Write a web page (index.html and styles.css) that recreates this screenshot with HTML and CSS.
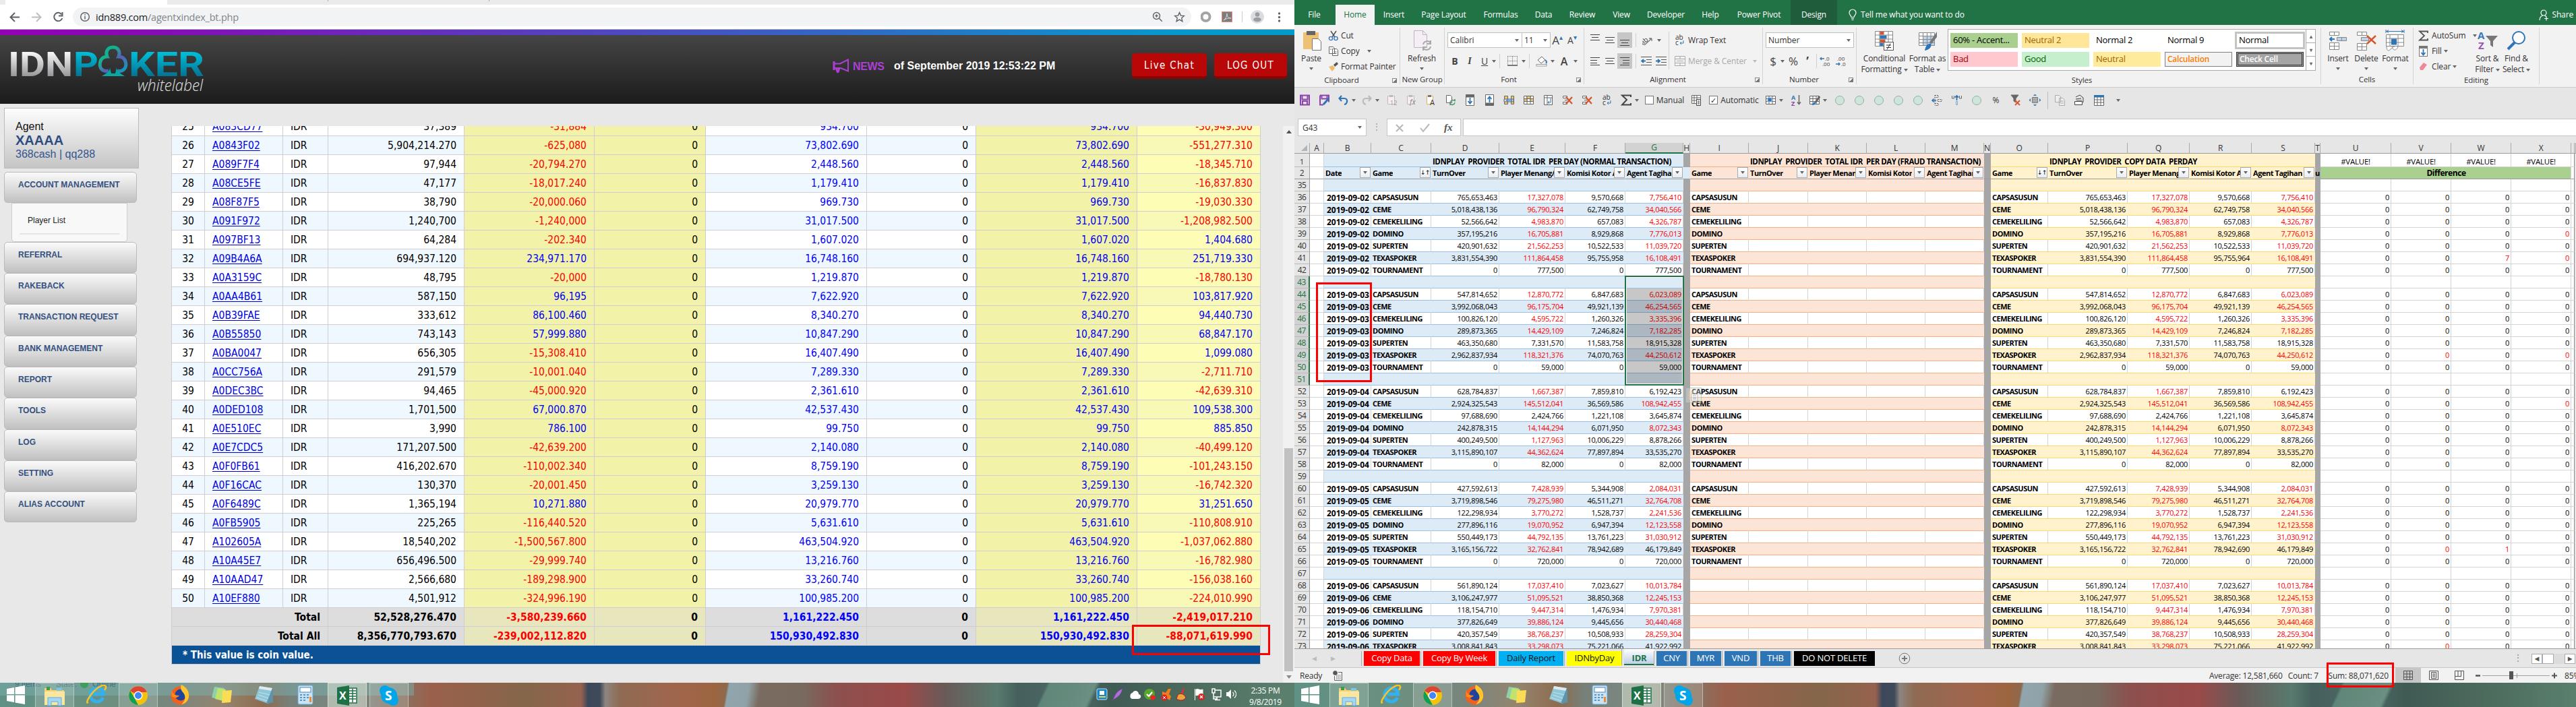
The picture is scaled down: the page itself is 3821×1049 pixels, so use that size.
FILE: index.html
```html
<!DOCTYPE html>
<html lang="en">
<head>
<meta charset="utf-8">
<title>Agent report and workbook</title>
<link rel="stylesheet" href="styles.css">
</head>
<body>
<div class="desktop">

<section class="monitor left">
  <div class="chrome-tabs"><i class="tab-active"></i><i class="tab-sep"></i><i class="tab-sep two"></i></div>
  <div class="chrome-bar">
    <svg class="nav" width="96" height="36" viewBox="0 0 96 36" fill="none" stroke="#5f6368" stroke-width="2"><path d="M29 18.500H16M22 12l-6.500 6.500L22 25"/><path stroke="#bcbec0" d="M47 18.500h13M54 12l6.500 6.500L54 25"/><path d="M91.500 14.500A6.200 6.200 0 1 0 92.300 20"/><path d="M92.500 11v5.500H87" /></svg>
    <div class="omnibox">
      <svg width="16" height="16" viewBox="0 0 16 16" fill="none" stroke="#5f6368" stroke-width="1.500"><circle cx="8" cy="8" r="6.300"/><path d="M8 7v4.500M8 4.300v1.500"/></svg>
      <span class="url">idn889.com<b>/agentxindex_bt.php</b></span>
      <svg class="zoomi" width="16" height="16" viewBox="0 0 16 16" fill="none" stroke="#5f6368" stroke-width="1.400"><circle cx="6.500" cy="6.500" r="5"/><path d="M10.300 10.300l4.500 4.500M4.300 6.500h4.400M6.500 4.300v4.400"/></svg>
      <svg width="17" height="16" viewBox="0 0 17 16" fill="none" stroke="#5f6368" stroke-width="1.400"><path d="M8.500 1.500l2 4.600 5 .4-3.800 3.300 1.200 4.900-4.400-2.600-4.400 2.600 1.200-4.900L1.500 6.500l5-.4z"/></svg>
    </div>
    <svg class="ext" width="136" height="36" viewBox="0 0 136 36"><circle cx="7.500" cy="18" r="6" fill="none" stroke="#a3a3a3" stroke-width="4"/><rect x="31.500" y="10.500" width="15" height="15" fill="#7d7b7b" stroke="#e08a84"/><path d="M34 23c3-2 5-6 5-10 0 5 2 7 6 7-4-.6-7 .5-11 3z" fill="none" stroke="#ddd"/><path d="M61.500 10v16" stroke="#ccc"/><circle cx="84" cy="18" r="10" fill="#dadce0"/><circle cx="84" cy="14.500" r="3.300" fill="#9a9ea3"/><ellipse cx="84" cy="22" rx="5.800" ry="3.300" fill="#9a9ea3"/><g fill="#5f6368"><circle cx="116.500" cy="13" r="1.700"/><circle cx="116.500" cy="18.500" r="1.700"/><circle cx="116.500" cy="24" r="1.700"/></g></svg>
  </div>
  <div class="rainbow"></div>
  <header class="site-head">
    <svg class="logo" width="310" height="102" viewBox="0 0 310 102">
      <defs>
        <linearGradient id="silver" x1="0" y1="0" x2="0" y2="1"><stop offset="0.200" stop-color="#f4f4f4"/><stop offset="1" stop-color="#77777b"/></linearGradient>
        <linearGradient id="teal" x1="0" y1="0" x2="0" y2="1"><stop offset="0.200" stop-color="#00bcd6"/><stop offset="1" stop-color="#04597c"/></linearGradient>
        <linearGradient id="club" x1="0" y1="0" x2="1" y2="1"><stop offset="0" stop-color="#0aa7a0"/><stop offset=".3" stop-color="#12b58c"/><stop offset=".6" stop-color="#5b5fb8"/><stop offset="1" stop-color="#0a9fc0"/></linearGradient>
      </defs>
      <text x="12" y="61" class="logo-t" fill="url(#silver)" textLength="96" lengthAdjust="spacingAndGlyphs">IDN</text>
      <text x="109" y="61" class="logo-t" fill="url(#teal)" textLength="37" lengthAdjust="spacingAndGlyphs">P</text>
      <text x="191" y="61" class="logo-t" fill="url(#teal)" textLength="112" lengthAdjust="spacingAndGlyphs">KER</text>
      <path d="M161 53c-9 2-14-4-12.500-12 1-6 5-9 10.500-9-3-6 0-14 8.500-14s11.500 8 8.500 14c6 0 9.500 3 10.500 9 1.500 8-4 14-12.500 12" fill="none" stroke="url(#club)" stroke-width="5"/>
      <path d="M163 48c0 6-4 8-12 13h34c-8-5-12-7-12-13l-2 9h-6z" fill="#08a79f"/>
      <text x="204" y="83" class="logo-w" textLength="97" lengthAdjust="spacingAndGlyphs">whitelabel</text>
    </svg>
    <div class="news">
      <svg width="25" height="22" viewBox="0 0 25 22" fill="none" stroke="#ac3fd4" stroke-width="2"><path d="M23 1.500v17L12 14H2V7.500h9z"/><path d="M2 4v13M5 14l3 7M10 14l-2 6" stroke-width="3"/></svg>
      <b>NEWS</b><span>of September 2019 12:53:22 PM</span>
    </div>
    <span class="btn">Live Chat</span><span class="btn out">LOG OUT</span>
  </header>
  <div class="site-body">
    <aside class="side">
      <div class="agent"><span>Agent</span><b>XAAAA</b><em>368cash | qq288</em></div>
      <div class="mi first">ACCOUNT MANAGEMENT</div>
      <div class="sub"><span>Player List</span></div>
      <div class="mi">REFERRAL</div><div class="mi">RAKEBACK</div><div class="mi">TRANSACTION REQUEST</div><div class="mi">BANK MANAGEMENT</div><div class="mi">REPORT</div><div class="mi">TOOLS</div><div class="mi">LOG</div><div class="mi">SETTING</div><div class="mi">ALIAS ACCOUNT</div>
    </aside>
    <div class="report">
      <table class="players">
        <colgroup><col style="width:50px"><col style="width:116px"><col style="width:67px"><col style="width:202px"><col style="width:193px"><col style="width:165px"><col style="width:239px"><col style="width:162px"><col style="width:239px"><col style="width:183px"></colgroup>
        <tbody id="players"></tbody>
      </table>
      <i class="mark m1"></i>
    </div>
    <div class="scroll"><i class="up"></i><i class="thumb"></i><i class="down"></i></div>
  </div>
  <footer class="taskbar">
    <div class="ghost"><span>9 items</span><span>State:</span><i></i><span>Online</span></div>
    <div class="apps"></div>
    <div class="tray">
      <svg width="210" height="34" viewBox="0 0 210 34">
        <rect x="3" y="9" width="15" height="16" rx="2" fill="#1488cf" stroke="#cde"/><rect x="7" y="12" width="7" height="6" fill="#fff"/><path d="M6 21h10" stroke="#f5d33d" stroke-width="2"/>
        <path d="M27 26c3-9 6-14 14-17-2 8-6 12-12 15z" fill="#b06fd8" stroke="#7a3cab" stroke-width=".6"/>
        <path d="M55 24h9c5 0 6-6 1-7 0-5-7-7-9-2-4 0-5 8-1 9z" fill="#fff"/>
        <circle cx="81" cy="17" r="8" fill="#5aa52c"/><path d="M77 17l3 3 5-6" stroke="#fff" stroke-width="2" fill="none"/><circle cx="86" cy="22" r="3.600" fill="#e22"/>
        <path d="M100 13l5 2 4-6h4l-3 8 3 3-2 6-6-4-5 2z" fill="#f57c1c"/><circle cx="103" cy="22" r="4.500" fill="#e22020"/><path d="M101 20l4 4m0-4l-4 4" stroke="#fff"/>
        <path d="M131 8l2 1-3 9h-3z" fill="#d33"/><path d="M123 18c4-3 9-2 12 4-3 5-9 5-14 2z" fill="#e9a53a" stroke="#b13"/>
        <path d="M148.500 9v17M150 10c4-2 5 2 10 0v9c-5 2-6-2-10 0z" fill="#fff" stroke="#fff"/><circle cx="158" cy="21" r="5" fill="#d22"/><path d="M156 19l4 4m0-4l-4 4" stroke="#fff" stroke-width="1.300"/>
        <path d="M178 11h9v10h-10M174 9v6h4V9zM176 15v9h6M181 21v4M178 25.500h8" fill="none" stroke="#fff" stroke-width="1.500"/>
        <path d="M195 14h3l4-4v14l-4-4h-3z" fill="#fff"/><path d="M204.500 14c2 2 2 4 0 6M207 11.500c3.500 3.500 3.500 7.500 0 11" fill="none" stroke="#fff" stroke-width="1.200"/>
      </svg>
      <div class="clock"><span>2:35 PM</span><span>9/8/2019</span></div>
    </div>
  </footer>
</section>

<section class="monitor right">
  <nav class="xl-tabs">
    <span style="width:59px">File</span><i></i><span class="on" style="width:58px">Home</span><span style="width:57px">Insert</span><span style="width:91px">Page Layout</span><span style="width:78px">Formulas</span><span style="width:49px">Data</span><span style="width:66px">Review</span><span style="width:50px">View</span><span style="width:82px">Developer</span><span style="width:50px">Help</span><span style="width:94px">Power Pivot</span><span class="ctx" style="width:69px">Design</span>
    <svg class="bulb" width="14" height="18" viewBox="0 0 14 18" fill="none" stroke="#fff" stroke-width="1.200"><path d="M5 12.500C5 10 2 9 2 6a5 5 0 0 1 10 0c0 3-3 4-3 6.500zM5 14.500h4M5.500 16.500h3"/></svg>
    <span class="tell">Tell me what you want to do</span>
    <svg class="shi" width="15" height="18" viewBox="0 0 15 18" fill="none" stroke="#fff" stroke-width="1.200"><circle cx="7" cy="6" r="4"/><path d="M1 17c0-4 2-6 4.500-7M9 10l2 2M8 14.500h6M11 11.500v6"/></svg>
    <span class="share">Share</span>
  </nav>

  <div class="ribbon">
    <div class="grp" style="width:157px">
      <div class="gb">
        <div class="big" style="width:50px"><svg width="32" height="32" viewBox="0 0 32 32"><rect x="4" y="4" width="23" height="25" fill="#eec275"/><rect x="9" y="2" width="13" height="6" fill="#666"/><path d="M17.500 13.500h9l4 4v13h-13z" fill="#fff" stroke="#777"/></svg><span>Paste</span><i class="dd"></i></div>
        <div class="stack"><span><svg width="16" height="16" viewBox="0 0 16 16"><path d="M4 1l6 9M12 1l-6 9" stroke="#555" stroke-width="1.600"/><g fill="none" stroke="#3a78b9" stroke-width="1.400"><circle cx="4" cy="12" r="2.600"/><circle cx="11.500" cy="12" r="2.600"/></g></svg>Cut</span><span><svg width="16" height="16" viewBox="0 0 16 16" fill="#fff" stroke="#666"><path d="M1.500 1.500h6l2 2v8h-8zM6.500 4.500h6l2 2v8h-8zM3 5h2M8.500 9h4M8.500 11.500h4"/></svg>Copy<i class="dd gap"></i></span><span><svg width="16" height="16" viewBox="0 0 16 16"><path d="M1 8l6-2 3 4-4 5z" fill="#eebb6b"/><path d="M8 5l5-4 2 3-5 4z" fill="#555"/></svg>Format Painter</span></div>
      </div><div class="gl">Clipboard<b class="ln"></b></div>
    </div>
    <div class="grp" style="width:66px"><div class="gb"><div class="big" style="width:64px"><svg width="30" height="32" viewBox="0 0 30 32"><path d="M3.500 1.500h13l6 6v19h-19z" fill="#f5eef5" stroke="#bfb3bf"/><path d="M16.500 1.500v6h6" fill="none" stroke="#bfb3bf"/><path d="M17 22a6 6 0 0 1 11-2M28 25a6 6 0 0 1-11 2M28 16v5h-5M17 31v-5h5" fill="none" stroke="#aaa" stroke-width="2"/></svg><span>Refresh</span><i class="dd"></i></div></div><div class="gl">New Group</div></div>
    <div class="grp" style="width:207px">
      <div class="gb col">
        <div class="line r1"><span class="combo" style="width:111px">Calibri<i class="dd"></i></span><span class="combo" style="width:43px">11<i class="dd"></i></span><span class="ic" style="width:22px;font-size:17px">A<sup>▴</sup></span><span class="ic" style="width:22px;font-size:14px">A<sup>▾</sup></span></div>
        <div class="line r2"><span class="ic" style="width:22px"><b>B</b></span><span class="ic" style="width:22px"><em>I</em></span><span class="ic" style="width:22px"><u>U</u></span><i class="dd"></i><i class="vs"></i><span class="ic" style="width:28px"><svg width="15" height="15" viewBox="0 0 15 15" fill="none" stroke="#777" stroke-dasharray="1 1"><path d="M.5.500v14M7.500.500v14M14.500.500v14M0 .5h15M0 7.500h15"/><path d="M0 14h15" stroke-dasharray="none" stroke-width="2"/></svg></span><i class="dd"></i><i class="vs"></i><span class="ic" style="width:27px"><svg width="18" height="17" viewBox="0 0 18 17"><path d="M3 7l6-5 5 5-6 5z" fill="#fff" stroke="#666"/><path d="M14 7c3 2 2 4 1 5" stroke="#3a78b9" stroke-width="2" fill="none"/><rect x="1" y="13.500" width="15" height="2.500" fill="#fff" stroke="#999"/></svg></span><i class="dd"></i><span class="ic fc" style="width:28px">A</span><i class="dd"></i></div>
      </div><div class="gl">Font<b class="ln"></b></div>
    </div>
    <div class="grp" style="width:265px">
      <div class="gb algn">
        <div class="col">
          <div class="line r1"><span class="ic w"><i class="ba t"></i></span><span class="ic w"><i class="ba"></i></span><span class="ic w sel"><i class="ba b"></i></span><i class="vs"></i><span class="ic" style="width:27px"><svg width="17" height="16" viewBox="0 0 17 16"><path d="M3 15L14 5M14 5h-4M14 5v4" stroke="#777" stroke-width="1.300" fill="none"/><text x="-3" y="10" transform="rotate(-40 6 8)" font-size="10" fill="#444">ab</text></svg></span><i class="dd"></i></div>
          <div class="line r2"><span class="ic w"><i class="ba l"></i></span><span class="ic w"><i class="ba"></i></span><span class="ic w sel"><i class="ba r"></i></span><i class="vs"></i><span class="ic w"><svg width="16" height="13" viewBox="0 0 16 13" stroke="#555" fill="none"><path d="M0 .5h16M8 4.500h8M8 8.500h8M0 12.500h16"/><path d="M7 6.500H1M4 4L1 6.500 4 9" stroke="#2e75b6" stroke-width="1.800"/></svg></span><span class="ic w"><svg width="16" height="13" viewBox="0 0 16 13" stroke="#555" fill="none"><path d="M0 .5h16M8 4.500h8M8 8.500h8M0 12.500h16"/><path d="M0 6.500h6M3 4l3 2.500L3 9" stroke="#2e75b6" stroke-width="1.800"/></svg></span></div>
        </div>
        <i class="vs tall"></i>
        <div class="col wrapc"><div class="line r1"><svg width="16" height="17" viewBox="0 0 16 17"><text x="1" y="8" font-size="10" fill="#333">ab</text><text x="1" y="16" font-size="10" fill="#333">c</text><path d="M13 9v4H8M10 11l-2 2 2 2" stroke="#2e75b6" fill="none"/></svg>Wrap Text</div><div class="line r2 dis"><svg width="16" height="15" viewBox="0 0 16 15" fill="none" stroke="#aaa"><path d="M.5.500h15v14H.5zM0 4.500h16M0 10.500h16M8 0v4M8 11v4M3 7.500h10"/></svg>Merge &amp; Center<i class="dd gap"></i></div></div>
      </div><div class="gl">Alignment<b class="ln"></b></div>
    </div>
    <div class="grp" style="width:139px"><div class="gb col"><div class="line r1"><span class="combo" style="width:131px">Number<i class="dd"></i></span></div><div class="line r2 num"><span class="ic" style="width:22px">$</span><i class="dd"></i><span class="ic" style="width:26px">%</span><span class="ic" style="width:16px"><b>’</b></span><i class="vs"></i><svg width="48" height="16" viewBox="0 0 48 16" font-size="8" fill="#444"><text x="8" y="7">.0</text><text x="4" y="15">.00</text><path d="M7 4H1M3 2L1 4l2 2" stroke="#2e75b6" fill="none" stroke-width="1.300"/><text x="26" y="7">.00</text><text x="32" y="15">.0</text><path d="M24 12h6M28 10l2 2-2 2" stroke="#2e75b6" fill="none" stroke-width="1.300"/></svg></div></div><div class="gl">Number<b class="ln"></b></div></div>
    <div class="grp" style="width:689px">
      <div class="gb sty">
        <div class="big" style="width:76px"><svg width="32" height="32" viewBox="0 0 32 32" fill="#fff" stroke="#888"><path d="M2.500 2.500h26v22h-26z"/><path d="M9 2.500v22M22 2.500v22M2.500 8h26M2.500 14h26M2.500 19h26"/><path fill="#d9532c" stroke="none" d="M9.500 3h6v4.500h-6zM9.500 14.500h8v4.500h-8z"/><path fill="#2e75b6" stroke="none" d="M9.500 8.500h10v5h-10zM9.500 19.500h5v4.500h-5z"/><rect x="15.500" y="18.500" width="14" height="12" stroke="#555"/><path d="M19 23h7M19 26.500h7M25 20.500l-5 9" stroke="#333"/></svg><span>Conditional</span><span>Formatting<i class="dd"></i></span></div>
        <div class="big" style="width:52px"><svg width="32" height="32" viewBox="0 0 32 32" fill="#fff" stroke="#888"><path d="M3.500 4.500h23v19h-23z"/><path fill="#bcd3ea" d="M9.500 9.500h17v14h-17z"/><path d="M9.500 4.500v19M15.500 4.500v19M21 4.500v19M3.500 9.500h23M3.500 14.500h23M3.500 19.500h23"/><path d="M30 3v8l-8 10-3-2z" fill="#777" stroke="none"/><path d="M12 31c1-7 5-11 9-10 2 5-3 9-9 10z" fill="#2e75b6" stroke="none"/></svg><span>Format as</span><span>Table<i class="dd"></i></span></div>
        <div class="gallery"><div class="cells"><span style="background:#a9d08e">60% - Accent...</span><span style="background:#ffe699;color:#9c6500">Neutral 2</span><span>Normal 2</span><span>Normal 9</span><span class="cur">Normal</span><span style="background:#ffc7ce;color:#9c0006">Bad</span><span style="background:#c6efce;color:#006100">Good</span><span style="background:#ffeb9c;color:#9c6500">Neutral</span><span class="calc">Calculation</span><span class="chk">Check Cell</span></div><div class="gs"><b>▴</b><b>▾</b><b>▾</b></div></div>
      </div><div class="gl styl">Styles</div>
    </div>
    <div class="grp" style="width:137px">
      <div class="gb cel">
        <div class="big" style="width:42px"><svg width="28" height="32" viewBox="0 0 28 32" fill="#fff" stroke="#888"><path d="M1.500 3.500h14v5h-14zM8.500 3.500v5M1.500 19.500h14v10h-14zM8.500 19.500v10M1.500 24.500h14"/><path d="M12.500 11.500h14v5h-14zM19.500 11.500v5" fill="#bcd3ea"/><path d="M9 14H2M5 11l-3 3 3 3" stroke="#2e75b6" fill="none" stroke-width="2"/></svg><span>Insert</span><i class="dd"></i></div>
        <div class="big" style="width:42px"><svg width="30" height="32" viewBox="0 0 30 32" fill="#fff" stroke="#888"><path d="M1.500 3.500h14v5h-14zM8.500 3.500v5M1.500 20.500h14v10h-14zM8.500 20.500v10M1.500 25.500h14"/><path d="M7.500 11.500h11v5h-11z" fill="#bcd3ea"/><path d="M16 9l13 12M29 9L16 21" stroke="#d9532c" stroke-width="2.400"/></svg><span>Delete</span><i class="dd"></i></div>
        <div class="big" style="width:44px"><svg width="30" height="32" viewBox="0 0 30 32" fill="#fff" stroke="#888"><path d="M1.500 7.500h26v17h-26zM7 7.500v17M19 7.500v17M1.500 13h26M1.500 19h26M2 25c0 3 1 6 3 6s6-6 9-6M10 25c1 5 6 8 9 0"/><path fill="#2e75b6" stroke="none" d="M9 13.500h8v9H9z"/><path d="M1 2.500h27M1 0v5M28 0v5M5 .5L2 2.500l3 2M24 .5l3 2-3 2" stroke="#2e75b6" fill="none"/></svg><span>Format</span><i class="dd"></i></div>
      </div><div class="gl">Cells</div>
    </div>
    <div class="grp" style="width:187px">
      <div class="gb">
        <div class="stack ed"><span><svg width="17" height="16" viewBox="0 0 17 16"><path d="M14 4V1.500H2L9 8l-7 6.500h12V12" fill="none" stroke="#555" stroke-width="1.800"/></svg>AutoSum<i class="dd gap"></i></span><span><svg width="17" height="16" viewBox="0 0 17 16"><rect x="1.500" y=".5" width="12" height="15" fill="#fff" stroke="#777"/><path d="M1.500 1h12v3h-12z" fill="#777"/><path d="M7.500 5v8M4.500 10l3 3.500 3-3.500" stroke="#2e75b6" stroke-width="1.800" fill="none"/></svg>Fill<i class="dd"></i></span><span><svg width="17" height="16" viewBox="0 0 17 16"><path d="M2 9l6-7 5 3-6 8H3z" fill="#ea8a9b"/></svg>Clear<i class="dd"></i></span></div>
        <div class="big" style="width:43px"><svg width="32" height="32" viewBox="0 0 32 32"><text x="1" y="14" font-size="15" font-weight="700" fill="#3a78b9">A</text><text x="2" y="29" font-size="15" font-weight="700" fill="#9557b4">Z</text><path d="M13 9h18l-7 8v9l-4-3v-6z" fill="#777"/></svg><span>Sort &amp;</span><span>Filter<i class="dd"></i></span></div>
        <div class="big" style="width:43px"><svg width="32" height="32" viewBox="0 0 32 32" fill="none" stroke="#2e75b6"><circle cx="19" cy="12" r="9" stroke-width="2" fill="#fff"/><path d="M13 19L3 29" stroke-width="4"/></svg><span>Find &amp;</span><span>Select<i class="dd"></i></span></div>
      </div><div class="gl">Editing</div>
    </div>
  </div>

  <div class="qat" id="qat"></div>
  <div class="fbar"><span class="nbox">G43<i class="dd"></i></span><span class="dots">⋮</span><span class="fxb"><svg width="110" height="24" viewBox="0 0 110 24" fill="none" stroke="#b8b8b8" stroke-width="2"><path d="M13 8l10 10M23 8L13 18M49 13l4 5 9-11"/><text x="84" y="17" font-size="15" font-style="italic" font-family="Liberation Serif, serif" fill="#555" stroke="none" font-weight="700">fx</text></svg></span><span class="inp"></span></div>

  <div class="sheet">
    <table class="grid"><colgroup id="cols"></colgroup><tbody id="grid"></tbody></table>
    <i class="selbox"></i><i class="pasteopt"><svg width="22" height="22" viewBox="0 0 22 22"><path d="M4 4h8v13H4z" fill="#f3d9b8"/><path d="M8 8h9v11H8z" fill="#fff" stroke="#999"/><path d="M10 11h5M10 14h5M10 16h5" stroke="#5a8fb8"/></svg></i><i class="mark m2"></i>
  </div>
  <div class="stabs">
    <span class="arr">◀</span><span class="arr">▶</span>
    <span class="st s1" style="width:83px">Copy Data</span><span class="st s1" style="width:107px">Copy By Week</span><span class="st s2" style="width:96px">Daily Report</span><span class="st s3" style="width:82px">IDNbyDay</span><span class="st s4">IDR</span><span class="st s5" style="width:45px">CNY</span><span class="st s5" style="width:46px">MYR</span><span class="st s5" style="width:48px">VND</span><span class="st s5" style="width:45px">THB</span><span class="st s6" style="width:120px">DO NOT DELETE</span>
    <svg class="plus" width="18" height="18" viewBox="0 0 18 18" fill="none" stroke="#777"><circle cx="9" cy="9" r="7.800"/><path d="M5 9h8M9 5v8" stroke-width="2"/></svg>
    <span class="hd">⋮</span><span class="hs"><b>◀</b><i></i><b>▶</b></span>
  </div>
  <div class="status">
    <span class="rdy">Ready</span><svg width="15" height="15" viewBox="0 0 15 15" fill="none" stroke="#666"><circle cx="3.500" cy="3.500" r="3" fill="#555"/><path d="M8 2.500h6M2.500 8v6.500h11V3" /><path d="M5 7h7M5 9.500h7M5 12h7" stroke-dasharray="2 1"/></svg>
    <span class="avg">Average: 12,581,660</span><span class="cnt">Count: 7</span><span class="sum">Sum: 88,071,620</span>
    <span class="vb on"><svg width="14" height="14" viewBox="0 0 14 14" fill="none" stroke="#555"><path d="M.5.500h13v13H.5zM5 .5v13M9.500.500v13M.5 5h13M.5 9.500h13"/></svg></span><span class="vb"><svg width="14" height="14" viewBox="0 0 14 14" fill="none" stroke="#555"><path d="M.5.500h13v13H.5zM3.500 2.500h7v9h-7zM5 5h4M5 7h4M5 9h4"/></svg></span><span class="vb"><svg width="14" height="14" viewBox="0 0 14 14" fill="none" stroke="#555"><path d="M.5.500h13v13H.5zM5 .5v8M9.500.500v8M0 8.500h10"/></svg></span>
    <svg class="slider" width="126" height="20" viewBox="0 0 126 20"><path d="M3 10.500h7" stroke="#555" stroke-width="2.500"/><path d="M13 10.500h100M64.500 7v7" stroke="#a0a0a0"/><rect x="53" y="4" width="6" height="12" fill="#555"/><path d="M116 10.500h8M120 6.500v8" stroke="#555" stroke-width="2"/></svg>
    <span class="pct">85%</span>
    <i class="mark m3"></i>
  </div>
  <footer class="taskbar"><div class="apps"></div></footer>
</section>
</div>
<template id="apps">
  <span class="app"><svg width="30" height="28" viewBox="0 0 30 28" fill="#fff"><path d="M1 5l11-2v10H1zM13.500 2.700L28 0v13H13.500zM1 14.500h11v10.500L1 23zM13.500 14.500H28V28l-14.500-2.500z"/></svg></span>
  <span class="app box"><svg width="34" height="30" viewBox="0 0 34 30"><path d="M2 4h9l2 3h18v22H2z" fill="#f3d372"/><path d="M5 2h5v5H5z" fill="#3d9b4a"/><path d="M20 4h8v4h-8z" fill="#7cc5ee"/><path d="M2 9h30v20H2z" fill="#fbe6a0"/><path d="M7 30V18h20v12h-5v-6H12v6z" fill="#a4d7f3" stroke="#5faede"/></svg></span>
  <span class="app"><svg width="32" height="30" viewBox="0 0 32 30"><path d="M26 19a10 10 0 1 1 .8-5H11" fill="none" stroke="#31b2ee" stroke-width="5"/><path d="M4 26C-2 30 7 12 19 4c11-7 13-1 9 4" fill="none" stroke="#f4c22c" stroke-width="2.500"/></svg></span>
  <span class="app box"><svg width="30" height="30" viewBox="0 0 30 30"><circle cx="15" cy="15" r="14" fill="#f4c20d"/><path d="M15 15L3 8a14 14 0 0 1 25 2H15z" fill="#db4437"/><path d="M3 8l6 10 6 11A14 14 0 0 1 3 8z" fill="#0f9d58"/><circle cx="15" cy="15" r="6.500" fill="#fff"/><circle cx="15" cy="15" r="5" fill="#4285f4"/></svg></span>
  <span class="app"><svg width="30" height="30" viewBox="0 0 30 30"><circle cx="15" cy="16" r="13.500" fill="#f0611f"/><circle cx="16" cy="15" r="8.500" fill="#20449c"/><path d="M17 0c8 4 12 10 11 18-1 6-5 10-11 11 6-5 7-12 3-17-3-3-5-7-3-12z" fill="#ffc62e"/><path d="M2 6c1 7 5 10 12 10-3 4-8 4-11 1z" fill="#ff8a16"/></svg></span>
  <span class="app"><svg width="32" height="28" viewBox="0 0 32 28"><path d="M5 2l15 2-6 17L1 18z" fill="#8fd0a8"/><path d="M10 4l12 2-4 17-12-3z" fill="#bfe36e"/><path d="M17 8l14-1-2 18-13 1z" fill="#fbdc55"/></svg></span>
  <span class="app"><svg width="32" height="30" viewBox="0 0 32 30"><path d="M10 2l19 3-6 23-20-7z" fill="#8fc6d8"/><path d="M10 2l19 3-1 4-19-3z" fill="#dfe9ee"/><path d="M20 28l9-23 1 4v17z" fill="#5d93ab"/><path d="M9 11l16 4M8 15l15 5M6 19l15 5" stroke="#c5e3ee"/></svg></span>
  <span class="app"><svg width="26" height="30" viewBox="0 0 26 30"><rect x="2" y="1" width="22" height="28" rx="2" fill="#c9e2f4" stroke="#6ba5d2"/><rect x="5" y="4" width="16" height="7" fill="#fff" stroke="#4b87b9"/><g fill="#5b95c8"><path d="M5 14h3v2H5zM10 14h3v2h-3zM15 14h3v2h-3zM5 18h3v2H5zM10 18h3v2h-3zM15 18h3v2h-3zM5 22h3v2H5zM10 22h3v2h-3z"/></g><path d="M19 18h3v8h-3z" fill="#f08b2c"/></svg></span>
  <span class="app box lit"><svg width="32" height="30" viewBox="0 0 32 30"><path d="M17 4h13v22H17z" fill="#fff" stroke="#1e7145" stroke-width="1.500"/><path d="M19 8h10M19 12h10M19 16h10M19 20h10M24 5v20" stroke="#1e7145" stroke-width="1.500"/><path d="M1 3l18-3v30L1 27z" fill="#1e7145"/><text x="4" y="21" font-size="16" font-weight="700" fill="#fff">X</text></svg></span>
  <span class="app box"><svg width="30" height="30" viewBox="0 0 30 30" fill="#00a5ea"><circle cx="15" cy="15" r="12"/><circle cx="9" cy="8" r="8"/><circle cx="21" cy="22" r="8"/><text x="9" y="22" font-size="19" font-weight="700" fill="#fff">S</text></svg></span>
</template>
<script src="app.js"></script>
</body>
</html>
```
FILE: styles.css
```css
*{box-sizing:border-box}
body{margin:0;background:#e8e8e8;overflow:hidden}
i,em{font-style:normal}
.desktop{display:flex;width:3821px;height:1049px;font-family:"Open Sans","Noto Sans",sans-serif}
.monitor{display:flex;flex-direction:column;height:1049px;overflow:hidden}
.left{width:1920px}
.right{width:1901px;background:#e6e6e6;font-size:12px;color:#333}
svg{display:block;flex:none}

.chrome-tabs{height:7px;background:#ebebeb;display:flex;flex:none}
.tab-active{width:240px;margin-left:8px;background:#fff}
.tab-sep{width:1px;height:2px;background:#aaa;margin-left:238px}
.chrome-bar{height:37px;background:#fff;border-bottom:1px solid #b9b7b9;display:flex;align-items:center;flex:none}
.nav{margin-right:12px}
.omnibox{width:1659px;height:28px;border-radius:14px;background:#f1f3f4;display:flex;align-items:center;padding:0 9px 0 10px}
.url{font-size:14.500px;color:#222;margin-left:8px;flex:1;letter-spacing:-.22px}
.url b{font-weight:400;color:#80868b}
.zoomi{margin-right:16px}
.ext{margin-left:14px}
.rainbow{height:8px;flex:none;background:linear-gradient(90deg,#9400b8 0,#8a08b8 10%,#4b4cc2 50%,#0798cc 90%,#009ccb)}
.site-head{height:102px;flex:none;background:linear-gradient(#454545,#1b1b1b);display:flex;align-items:flex-start}
.logo-t{font:700 50px Roboto,sans-serif}
.logo-w{font:italic 300 23px "Open Sans",sans-serif;fill:#e3e3e3}
.news{display:flex;align-items:center;margin:35px 0 0 925px;width:444px;height:22px;font-family:"Liberation Sans",sans-serif}
.news b{color:#ac3fd4;font-size:16px;margin:1px 11px 0 5px;width:50px;letter-spacing:-.4px}
.news span{color:#fff;font-weight:700;font-size:16px;white-space:nowrap}
.btn{margin-top:27px;width:111px;height:38px;text-align:center;background:#b90606;border-radius:5px;border-bottom:4px solid #8c0303;color:#fff;font:15px/36px "DejaVu Sans Condensed","DejaVu Sans",sans-serif;letter-spacing:1.300px}
.out{margin-left:11px;width:108px}
.site-body{height:859px;display:flex;flex:none;background:#e8e8e8}
.side{width:254px;padding:6px 0 0 6px;font-family:"Liberation Sans",sans-serif}
.agent{width:200px;height:90px;border:1px solid #bbb;background:linear-gradient(#fdfdfd,#c5c5c5);padding:17px 0 0 16px;display:flex;flex-direction:column;font-size:16px;color:#111}
.agent span{line-height:20px}
.agent b{font-size:20px;line-height:20px;color:#2d4d80}
.agent em{line-height:22px;color:#34568f}
.mi{width:197px;height:46.300px;border:1px solid #bbb;border-radius:5px;background:linear-gradient(#fafafa,#c1c1c1);padding:10px 0 0 20px;font-size:12px;font-weight:700;color:#34507f;line-height:16px}
.first{margin-top:5px}
.sub{margin-left:11px;width:172px;height:57.500px;border:1px solid #ccc;border-radius:0 0 4px 4px;background:#f8f8f8;padding:18px 11px 0;font-size:12px;color:#222}
.sub span{display:block;padding:0 0 12px 12px;border-bottom:2px solid #e4e4e4}
.report{position:relative;width:1649px;margin-top:33px;height:826px;overflow:hidden}
.players{table-layout:fixed;width:1616px;border-spacing:0;margin-top:-13px;font:15.500px/20px "DejaVu Sans Condensed","DejaVu Sans",sans-serif;font-stretch:condensed;color:#000}
.players td{height:28px;padding:0 11px 0 12px;border:solid #cdcdd2;border-width:0 1px 1px 0;text-align:right;background:#fff;white-space:nowrap}
.players tr:nth-child(even) td{background:#f0f8ff}
.players td:first-child{border-left:1px solid #cdcdd2;text-align:center;padding:0}
.players td:nth-child(2),.players td:nth-child(3){text-align:left;padding-left:11px}
.players td a{color:#0000e6;text-decoration:underline;text-underline-offset:2px}
.players tr td:nth-child(5),.players tr td:nth-child(6),.players tr td:nth-child(9){background:#f2f3a9}
.players tr td:nth-child(10){background:#fdfdb5}
.players tr:nth-child(even) td:nth-child(10){background:#f8f9b6}
.players tr.tot td{background:#ddd;font-weight:700;text-align:right;padding:0 11px}
.players tr.tot td.y{background:#e8e6bd}
.players tr.foot td{background:#0b5196;color:#fff;text-align:left;padding-left:16px;font-weight:700;font-size:15px}
.players tr td.r{color:#f00}
.players tr td.bl{color:#00f}
.mark{position:absolute;border:3px solid #f00}
.m1{left:1425px;top:740px;width:205px;height:45px}
.scroll{width:17px;margin-top:33px;background:#f1f1f1;display:flex;flex-direction:column;align-items:center}
.up,.down{border:4px solid transparent}
.up{border-bottom:5px solid #505050;margin-top:2px}
.down{border-top:5px solid #8a8a8a;margin-top:6px}
.thumb{width:13px;height:331px;background:#c1c1c1;margin-top:467px}

.taskbar{height:36px;flex:none;display:flex;position:relative;background:linear-gradient(100deg,transparent 1063px,#91a5ad 1066px,#8fa2a8 1095px,transparent 1112px),linear-gradient(115deg,transparent 1408px,#5f8678 1412px,#6b8f82 1474px,transparent 1480px),linear-gradient(90deg,#5f9184 0,#6d8f80 160px,#7a857c 260px,#94856f 330px,#8d6c50 390px,#768078 430px,#7c8a84 520px,#8b7060 600px,#9b604b 640px,#84664a 780px,#96624e 862px,#3c485a 872px,#3f4a5a 890px,#8d8580 898px,#8f6a52 920px,#a0664d 1000px,#9c6540 1060px,#7a6c60 1100px,#786a5f 1190px,#8c504d 1240px,#9a4a48 1340px,#6a5a58 1400px,#587a6e 1480px,#455f5c 1510px,#4e6b66 1580px,#3f5b54 1650px,#4b6a5c 1760px,#5a7f6d 1900px)}
.ghost{position:absolute;left:0;top:0;width:614px;height:19px;background:rgba(125,180,180,.45);font:12px/12px "Liberation Sans",sans-serif;color:#47707d;overflow:hidden}
.ghost span{float:left;margin:-4px 0 0 22px}
.ghost i{float:left;width:12px;height:12px;border-radius:6px;background:#3f9e5c;margin:-4px 0 0 5px}
.ghost span:last-child{margin-left:6px}
.apps{display:flex;position:relative}
.app{width:58px;height:36px;display:flex;align-items:center;justify-content:center;margin-right:4px}
.app:first-child{width:48px}
.box{border:1px solid rgba(225,235,230,.5);border-bottom:0;background:rgba(225,235,225,.2)}
.lit{background:rgba(230,235,220,.5);border-color:#d8ddd4}
.tray{margin-left:auto;display:flex}
.clock{width:86px;color:#fff;font-size:12px;line-height:17px;display:flex;flex-direction:column;align-items:center;padding-top:3px;letter-spacing:-.25px}

.xl-tabs{height:37px;background:#217346;display:flex;color:#fff;flex:none;line-height:30px}
.xl-tabs span{text-align:center;padding-top:7px;white-space:nowrap;letter-spacing:-.15px}
.xl-tabs>i{width:2px}
.xl-tabs .on{background:#f3f2f2;color:#217346;margin-top:7px;padding-top:0}
.xl-tabs .ctx{background:#1e5c3c}
.bulb{margin:13px 5px 0 16px}
.shi{margin:13px 4px 0 auto}
.xl-tabs .share{margin-right:4px}
.ribbon{height:93px;background:#f3f2f2;border-bottom:1px solid #cdcdcd;display:flex;flex:none}
.grp{display:flex;flex-direction:column;position:relative;flex:none;border-right:1px solid #d4d4d4;height:84px;margin-top:4px}
.gb{height:71px;display:flex}
.col{display:flex;flex-direction:column}
.gl{text-align:center;height:16px;line-height:18px;font-size:11.500px;letter-spacing:-.1px;position:relative;padding-right:16px}
.grp:nth-child(2) .gl,.grp:nth-child(n+7) .gl{padding:0}
.gl.styl{padding:0 20px 0 0}
.ln{position:absolute;right:4px;top:6px;width:7px;height:7px;border:solid #888;border-width:1px 0 0 1px;background:linear-gradient(135deg,transparent 45%,#777 45%)}
.big{display:flex;flex-direction:column;align-items:center;padding-top:3px;line-height:16px;white-space:nowrap;letter-spacing:-.15px}
.big svg{margin-bottom:-1px;height:35px;padding-bottom:3px}
.big span{margin-top:2px;line-height:14px}
.dd{display:inline-block;width:0;height:0;border:3px solid transparent;border-top:4px solid #666;border-bottom:0;flex:none;vertical-align:middle}
.big>.dd{margin-top:6px}
.big span .dd{margin-left:3px}
.stack{display:flex;flex-direction:column;letter-spacing:-.15px}
.stack span{height:23px;display:flex;align-items:center;gap:3px;white-space:nowrap}
.stack .gap{margin-left:8px}
.line{display:flex;align-items:center;height:23px}
.r1{margin-top:7px}
.r2{margin-top:8px}
.grp>.col{padding-left:4px}
.combo{height:23px;border:1px solid #c0c0c0;background:#fff;padding:0 4px 0 3px;display:flex;align-items:center;justify-content:space-between;margin-right:-1px}
.ic{display:flex;align-items:center;justify-content:center;color:#444;font-size:14px;flex:none}
.ic sup{font-size:10px;color:#2e75b6;line-height:4px;margin-top:-10px}
.ic em{font-style:italic;font-family:"Liberation Serif",serif;font-weight:700}
.fc{font-size:16px;font-weight:600}
.vs{width:1px;height:21px;background:#d0d0d0;margin:0 4px 0 5px}
.vs.tall{height:56px;margin:6px 6px 0 auto}
.w{width:22px;height:23px}
.sel{background:#c6c6c6}
.algn{padding-left:5px}
.wrapc{width:132px}
.wrapc .line{gap:4px;padding-left:2px;white-space:nowrap;letter-spacing:-.1px}
.dis{color:#a8a8a8}
.dis .gap{margin-left:5px;border-top-color:#bbb}
.ba{width:14px;height:9px;border-top:1px solid #444;border-bottom:1px solid #444;background:linear-gradient(#444,#444) center/10px 1px no-repeat}
.ba.t{margin-bottom:9px}
.ba.b{margin-top:8px}
.ba.l,.ba.r{height:12px;background:linear-gradient(#444,#444) 0 3px/10px 1px no-repeat,linear-gradient(#444,#444) 0 7px/10px 1px no-repeat}
.ba.r{background-position:100% 3px,100% 7px}
.num .ic{font-size:17px}
.sty{padding-left:3px}
.gallery{margin:2px 0 0 4px;width:546px;height:62px;border:1px solid #ababab;background:#fff;display:flex}
.cells{display:grid;grid-template-columns:repeat(5,100px);grid-template-rows:22px 22px;gap:6px;padding:5px 0 0 3px;width:531px;font-size:13px;color:#000}
.cells span{padding-left:4px;line-height:21px;letter-spacing:-.25px;white-space:nowrap;overflow:hidden}
.cells .cur{outline:3px solid #c3c3c3;outline-offset:-1px}
.cells .calc{border:1px solid #7f7f7f;background:#f2f2f2;color:#fa7d00;font-weight:600;font-size:12px;line-height:19px;padding-left:3px}
.cells .chk{border:3px double #333;background:#a5a5a5;color:#fff;font-weight:600;line-height:16px;font-size:12px;padding-left:2px}
.gs{width:14px;border-left:1px solid #ababab;display:flex;flex-direction:column;font-size:8px;color:#666;text-align:center}
.gs b{height:20px;line-height:19px;border-bottom:1px solid #ababab}
.gs b:last-child{border:0}
.cel{padding-left:4px}
.ed{width:88px;padding-left:7px}

.qat{height:46px;display:flex;align-items:center;flex:none;padding:0 0 9px 1px}
.q{display:flex;align-items:center;justify-content:center;gap:4px;flex:none;white-space:nowrap}
.cb{width:13px;height:13px;border:1px solid #777;background:#fff;font-size:11px;line-height:11px;text-align:center}
.q .lbl{letter-spacing:-.1px}
.crc{width:14px;height:14px;border:1px solid #8db3a2;border-radius:50%;background:#cfe4da}
.fbar{display:flex;height:26px;flex:none}
.nbox,.fxb,.inp{border:1px solid #c6c6c6;background:#fff;height:26px}
.nbox{width:102px;margin-left:5px;padding:0 6px;display:flex;align-items:center;justify-content:space-between}
.dots{width:30px;text-align:center;line-height:24px;color:#999}
.fxb{width:110px}
.inp{flex:1;margin-left:3px;border-right:0}
.sheet{margin-top:10px;height:751px;overflow:hidden;position:relative;flex:none;border-bottom:1px solid #9b9b9b}
.grid{table-layout:fixed;width:1901px;border-spacing:0;font-size:11px;letter-spacing:-.25px;color:#000}
.grid td{height:18px;padding:1px 2px 0;line-height:16px;white-space:nowrap;overflow:hidden;text-align:right;background:#fff;border:solid #d4d4d4;border-width:0 1px 1px 0}
.grid tr.ch td{height:16px;background:#e6e6e6;border-right:1px solid #aaa;border-bottom:1px solid #9b9b9b;text-align:center;font-size:12px;line-height:14px;padding:0;color:#333}
.grid tr.ch td.cs{background:#d2d2d2;color:#217346;border-bottom:2px solid #217346}
.corner{margin-left:9px}
.grid td.rh{background:#e6e6e6;text-align:center;color:#333;font-size:12px;padding:0;border-right-color:#9b9b9b;border-bottom-color:#bbb;letter-spacing:-.5px}
.grid td.rs{background:#d2d2d2;color:#217346;border-right:2px solid #217346}
.grid td.ga{background:#a6a6a6;border-color:#a6a6a6}
.grid td.bB{border-bottom-color:#9bc2e6}
.grid td.bO{border-bottom-color:#f4b084}
.grid td.bY{border-bottom-color:#ffd966}
.grid td.fB{background:#ddebf7;border-right-color:#ddebf7}
.grid td.fO{background:#fce4d6;border-right-color:#fce4d6}
.grid td.fY{background:#fff2cc;border-right-color:#fff2cc}
.grid td.gm{text-align:left;font-weight:700;letter-spacing:-.48px}
.grid td.dt{font-size:12px;font-weight:700;letter-spacing:.05px;line-height:15px}
.grid td.r{color:#f00}
.grid td.edge{background:#fff;border-right:1px solid #888}
.grid td.off{background:#e6e6e6;border:0}
.grid tr.h1 td{height:20px;font-weight:700;text-align:left;white-space:pre;letter-spacing:-.47px;padding-top:5px;line-height:14px;font-size:11.500px}
.grid tr.h1 td.rh,.grid tr.h1 td.v{text-align:center;font-weight:400;letter-spacing:-.25px}
.grid tr.h2 td{font-weight:700;text-align:left;border-bottom-color:#9b9b9b;padding:0 0 0 2px;letter-spacing:-.45px}
.grid tr.h2 td.rh{text-align:center;font-weight:400;padding:0}
.grid tr.h2 td.df{background:#a9d08e;text-align:center;font-size:12px}
.grid tr.h2 td.ur{padding:0}
.h2 div{display:flex;justify-content:space-between;height:17px;line-height:18px;overflow:hidden}
.h2 div span{overflow:hidden}
.h2 div b{width:16px;height:16px;border:1px solid #ababab;background:linear-gradient(#fff,#e9edf3);flex:none;display:flex;align-items:center;justify-content:center;font:9px/14px "DejaVu Sans",sans-serif}
.selbox{position:absolute;left:490px;top:197px;width:88px;height:163px;border:2px solid #217346;background:linear-gradient(transparent 17px,rgba(0,0,0,.22) 17px);box-shadow:inset 0 0 0 1px #fff}
.pasteopt{position:absolute;left:580px;top:363px;width:24px;height:23px;border:1px solid #8fbca3;background:rgba(230,230,230,.6);opacity:.6}
.m2{left:32px;top:207px;width:83px;height:148px}
.stabs{height:28px;background:#e6e6e6;display:flex;border-bottom:1px solid #c6c6c6;flex:none;padding-left:15px}
.arr{width:28px;text-align:center;color:#bbb;font-size:9px;line-height:27px}
.arr:nth-child(2){width:55px;padding-right:27px}
.st{height:22px;margin:3px 5px 0 0;line-height:21px;text-align:center;font-size:13px;letter-spacing:-.2px;white-space:nowrap;color:#fff;box-shadow:-3px 0 #e6e6e6,-4px 0 #aaa;flex:none}
.arr+.st{margin-left:5px}
.s1{background:#f00}
.s2{background:#00b0f0;color:#111}
.s3{background:#ff0;color:#111}
.s4{width:45px;background:linear-gradient(#fff,#bcd0e8);color:#217346;font-weight:700;border-bottom:2px solid #217346;margin:0 3px 0 -2px;height:24px;line-height:26px}
.s5{background:#2e75b6}
.s6{background:#000}
.plus{margin:5px 0 0 30px}
.hd{margin-left:auto;color:#999;line-height:26px;margin-right:13px;font-size:14px}
.hs{display:flex;width:65px;height:15px;margin:7px 1px 0 0;background:#dcdcdc}
.hs b{width:16px;border:1px solid #ababab;background:#fff;font-size:8px;line-height:12px;text-align:center;color:#555}
.hs i{width:17px;background:#fff;border:1px solid #ababab;margin-right:16px}
.status{height:22px;background:#f3f2f2;display:flex;align-items:center;flex:none;position:relative;z-index:2;white-space:nowrap;letter-spacing:-.2px}
.rdy{width:50px;padding-left:8px;margin-right:7px}
.avg{margin-left:1285px;width:117px}
.cnt{width:60px}
.sum{width:100px}
.vb{width:38px;height:22px;display:flex;align-items:center;justify-content:center}
.vb.on{background:#c6c6c6}
.slider{margin:0 9px 0 2px}
.pct{width:17px;overflow:hidden}
.m3{left:1531px;top:-8px;width:100px;height:37px;z-index:3}
```
FILE: app.js
```js
// Player rows: username, turnover, win/loss, commission, net
const players = `A083CD77 37,389 -31,884 934.700 -30,949.300
A0843F02 5,904,214.270 -625,080 73,802.690 -551,277.310
A089F7F4 97,944 -20,794.270 2,448.560 -18,345.710
A08CE5FE 47,177 -18,017.240 1,179.410 -16,837.830
A08F87F5 38,790 -20,000.060 969.730 -19,030.330
A091F972 1,240,700 -1,240,000 31,017.500 -1,208,982.500
A097BF13 64,284 -202.340 1,607.020 1,404.680
A09B4A6A 694,937.120 234,971.170 16,748.160 251,719.330
A0A3159C 48,795 -20,000 1,219.870 -18,780.130
A0AA4B61 587,150 96,195 7,622.920 103,817.920
A0B39FAE 333,612 86,100.460 8,340.270 94,440.730
A0B55850 743,143 57,999.880 10,847.290 68,847.170
A0BA0047 656,305 -15,308.410 16,407.490 1,099.080
A0CC756A 291,579 -10,001.040 7,289.330 -2,711.710
A0DEC3BC 94,465 -45,000.920 2,361.610 -42,639.310
A0DED108 1,701,500 67,000.870 42,537.430 109,538.300
A0E510EC 3,990 786.100 99.750 885.850
A0E7CDC5 171,207.500 -42,639.200 2,140.080 -40,499.120
A0F0FB61 416,202.670 -110,002.340 8,759.190 -101,243.150
A0F16CAC 130,370 -20,001.450 3,259.130 -16,742.320
A0F6489C 1,365,194 10,271.880 20,979.770 31,251.650
A0FB5905 225,265 -116,440.520 5,631.610 -110,808.910
A102605A 18,540,202 -1,500,567.800 463,504.920 -1,037,062.880
A10A45E7 656,496.500 -29,999.740 13,216.760 -16,782.980
A10AAD47 2,566,680 -189,298.900 33,260.740 -156,038.160
A10EF880 4,501,912 -324,996.190 100,985.200 -224,010.990`.split('\n').map(l => l.split(' '));
const num = (v, c = '') => `<td class="${v[0] === '-' ? 'r' : 'bl'} ${c}">${v}</td>`;
let out = players.map(([u, t, w, k, n], i) => `<tr><td>${25 + i}</td><td><a>${u}</a></td><td>IDR</td><td>${t}</td>${num(w)}<td>0</td>${num(k)}<td>0</td>${num(k)}${num(n)}</tr>`).join('');
[['Total', '52,528,276.470', '-3,580,239.660', '1,161,222.450', '-2,419,017.210'],
 ['Total All', '8,356,770,793.670', '-239,002,112.820', '150,930,492.830', '-88,071,619.990']].forEach(([l, t, w, k, n]) => {
  out += `<tr class="tot"><td colspan="3">${l}</td><td>${t}</td>${num(w, 'y')}<td class="y">0</td>${num(k)}<td>0</td>${num(k, 'y')}${num(n, 'y')}</tr>`;
});
out += '<tr class="foot"><td colspan="10">* This value is coin value.</td></tr>';
document.getElementById('players').innerHTML = out;

// Worksheet columns A..X, by right edge
const edges = [23, 44, 114, 203, 304, 402, 491, 577, 587, 674, 762, 849, 936, 1023, 1033, 1118, 1236, 1328, 1420, 1514, 1522, 1627, 1716, 1805, 1894, 1899, 1901];
document.getElementById('cols').innerHTML = edges.map((e, i) => `<col style="width:${e - (edges[i - 1] || 0)}px">`).join('');
const games = ['CAPSASUSUN', 'CEME', 'CEMEKELILING', 'DOMINO', 'SUPERTEN', 'TEXASPOKER', 'TOURNAMENT'];
// A leading minus marks a value shown in red
const days = {
  '02': `765,653,463 -17,327,078 9,570,668 -7,756,410
5,018,438,136 -96,790,324 62,749,758 -34,040,566
52,566,642 -4,983,870 657,083 -4,326,787
357,195,216 -16,705,881 8,929,868 -7,776,013
420,901,632 -21,562,253 10,522,533 -11,039,720
3,831,554,390 -111,864,458 95,755,958 -16,108,491
0 777,500 0 777,500`,
  '03': `547,814,652 -12,870,772 6,847,683 -6,023,089
3,992,068,043 -96,175,704 49,921,139 -46,254,565
100,826,120 -4,595,722 1,260,326 -3,335,396
289,873,365 -14,429,109 7,246,824 -7,182,285
463,350,680 7,331,570 11,583,758 18,915,328
2,962,837,934 -118,321,376 74,070,763 -44,250,612
0 59,000 0 59,000`,
  '04': `628,784,837 -1,667,387 7,859,810 6,192,423
2,924,325,543 -145,512,041 36,569,586 -108,942,455
97,688,690 2,424,766 1,221,108 3,645,874
242,878,315 -14,144,294 6,071,950 -8,072,343
400,249,500 -1,127,963 10,006,229 8,878,266
3,115,890,107 -44,362,624 77,897,894 33,535,270
0 82,000 0 82,000`,
  '05': `427,592,613 -7,428,939 5,344,908 -2,084,031
3,719,898,546 -79,275,980 46,511,271 -32,764,708
122,298,934 -3,770,272 1,528,737 -2,241,536
277,896,116 -19,070,952 6,947,394 -12,123,558
550,449,173 -44,792,135 13,761,223 -31,030,912
3,165,156,722 -32,762,841 78,942,689 46,179,849
0 720,000 0 720,000`,
  '06': `561,890,124 -17,037,410 7,023,627 -10,013,784
3,106,247,977 -51,095,521 38,850,368 -12,245,153
118,154,710 -9,447,314 1,476,934 -7,970,381
377,826,649 -39,886,124 9,445,656 -30,440,468
420,357,549 -38,768,237 10,508,933 -28,259,304
3,008,841,843 -33,298,073 75,221,066 41,922,992`
};
const copyFix = { 41: '95,755,964', 65: '78,942,690' };
const diff = { 39: '0 0 0 -0', 41: '0 0 -7 -0', 49: '0 -0 0 -0', 53: '0 0 0 -0', 65: '0 -0 -1 0', 73: '0 -0 0 0' };
const cell = (v, c) => `<td class="${c}${v[0] === '-' ? ' r' : ''}">${v.replace('-', '')}</td>`;
const many = (n, c) => `<td class="${c}"></td>`.repeat(n);
const tail = '<td class="edge"></td><td class="off"></td>';

let g = '<tr class="ch"><td><svg class="corner" width="12" height="10" viewBox="0 0 12 10"><path d="M10 0v9H1z" fill="#b4b4b4"/></svg></td>' + 'ABCDEFGHIJKLMNOPQRSTUVWX'.split('').map(c => `<td${c === 'G' ? ' class="cs"' : ''}>${c}</td>`).join('') + '<td></td><td class="off"></td></tr>';
g += '<tr class="h1"><td class="rh">1</td><td></td><td colspan="2" class="bB fB"></td><td colspan="4" class="bB fB">IDNPLAY  PROVIDER  TOTAL IDR  PER DAY (NORMAL TRANSACTION)</td><td class="ga"></td><td class="bO fO"></td><td colspan="4" class="bO fO">IDNPLAY  PROVIDER  TOTAL IDR  PER DAY (FRAUD TRANSACTION)</td><td class="ga"></td><td class="bY fY"></td><td colspan="4" class="bY fY">IDNPLAY  PROVIDER  COPY DATA  PERDAY</td><td class="ga"></td>' + '<td class="v">#VALUE!</td>'.repeat(4) + tail + '</tr>';
const heads = (names, c) => names.map(n => `<td class="${c}"><div><span>${n}</span><b>${n === 'Game' && c !== 'fO' ? '↓↑' : '<i class="dd"></i>'}</b></div></td>`).join('');
g += '<tr class="h2"><td class="rh">2</td><td></td>' + heads(['Date', 'Game', 'TurnOver', 'Player Menang/', 'Komisi Kotor A', 'Agent Tagihan'], 'fB') + '<td class="fB"></td>' +
  heads(['Game', 'TurnOver', 'Player Menang', 'Komisi Kotor', 'Agent Tagihan'], 'fO') + '<td class="ga"></td>' +
  heads(['Game', 'TurnOver', 'Player Menang', 'Komisi Kotor A', 'Agent Tagihan'], 'fY') + '<td class="ga ur">ur</td><td class="df" colspan="4">Difference</td>' + tail + '</tr>';
for (let r = 35; r <= 73; r++) {
  const k = (r - 35) % 8, day = '0' + (2 + Math.floor((r - 35) / 8)), odd = r % 2;
  const B = 'bB' + (odd ? ' fB' : ''), O = 'bO' + (odd ? ' fO' : ''), Y = 'bY' + (odd ? ' fY' : '');
  g += `<tr><td class="rh${r > 42 && r < 52 ? ' rs' : ''}">${r}</td><td></td>`;
  if (k === 0) {
    g += many(6, B) + many(1, 'ga') + many(5, O) + many(1, 'ga') + many(5, Y) + many(1, 'ga') + many(4, '');
  } else {
    const v = days[day].split('\n')[k - 1].split(' '), y = v.slice(), name = games[k - 1];
    if (copyFix[r]) y[2] = copyFix[r];
    g += `<td class="${B} dt">2019-09-${day}</td><td class="${B} gm">${name}</td>` + v.map(x => cell(x, B)).join('') + many(1, 'ga') +
      `<td class="${O} gm">${r < 67 ? name : ''}</td>` + many(4, O) + many(1, 'ga') +
      `<td class="${Y} gm">${name}</td>` + y.map(x => cell(x, Y)).join('') + many(1, 'ga') +
      (diff[r] || '0 0 0 0').split(' ').map(x => cell(x, '')).join('');
  }
  g += tail + '</tr>';
}
document.getElementById('grid').innerHTML = g;

// Quick access toolbar
const svg = s => `<svg width="17" height="17" viewBox="0 0 17 17" fill="none" stroke="#666">${s}</svg>`;
const dd = '<i class="dd"></i>', circ = '<i class="crc"></i>';
const clip = '<path d="M2.500 2.500h10v12h-10z" fill="#f6eef2" stroke="#c4b8c0"/><path d="M5 1h5v3H5z" fill="#bbb" stroke="none"/>';
const grid = '<path d="M1.500 2.500h14v12h-14zM6 2.500v12M11 2.500v12M1.500 6.500h14M1.500 10.500h14" fill="#fff"/>';
const rows = '<path d="M1.500 2.500h6v3h-6zM1.500 11.500h6v3h-6zM4 8.500h4" fill="#fff"/>';
const items = [
  [29, svg('<path d="M2 1.500h13v14H2zM4.500 1.500v6h8v-6M5 15v-5h7v5" stroke="#8b44ac" stroke-width="2"/>')],
  [29, svg('<path d="M2 1.500h13v10M2 1.500v14h5M4.500 1.500v5h8v-5" stroke="#8b44ac" stroke-width="2"/><path d="M7 15l8-9" stroke="#2e75b6" stroke-width="3"/>')],
  [36, svg('<path d="M6 2L2.500 6 6 10M3 6h7c6 0 5 8 0 9" stroke="#2e75b6" stroke-width="2.200"/>') + dd],
  [35, svg('<path d="M11 2l3.500 4L11 10M14 6H7c-6 0-5 8 0 9" stroke="#bbb" stroke-width="2.200"/>') + dd],
  [29, svg(clip + '<text x="6" y="16" font-size="9" fill="#999" stroke="none">12</text>')],
  [29, svg(clip + '<text x="6" y="15" font-size="11" font-style="italic" fill="#888" stroke="none">fx</text>')],
  [29, svg('<path d="M2.500 2.500h9v12h-9z" fill="#fff" stroke="#e3b05e"/><path d="M4 1h5v3H4z" fill="#777" stroke="none"/><text x="7" y="16" font-size="11" fill="#333" stroke="none">A</text>')],
  [29, svg('<path d="M2.500 1.500h6l2 2v9h-8z" fill="#fff"/><path d="M8 12a4 4 0 0 1 7-2M15 12a4 4 0 0 1-7 2M15 7v3.500M8 16v-3" stroke="#4d9b71" stroke-width="1.600"/>')],
  [29, svg('<path d="M2.500.500h12v16h-12z" fill="#fff"/><path d="M2.500 1h12v3h-12z" fill="#666"/><path d="M8.500 5v8M5.500 10l3 3.500 3-3.500" stroke="#2e75b6" stroke-width="1.800"/>')],
  [29, svg('<path d="M2.500.500h12v16h-12z" fill="#fff"/><path d="M2.500 13h12v3h-12z" fill="#666"/><path d="M8.500 12V4M5.500 7l3-3.500 3 3.500" stroke="#2e75b6" stroke-width="1.800"/>')],
  [29, svg('<path d="M1.500 2.500h5v12h-5zM11.500 2.500h4v12h-4z" fill="#f0c36d"/><path d="M1 7h14v4H1z" fill="#cfe0f1"/><path d="M4 9h9M7 7L5 9l2 2M11 7l2 2-2 2" stroke="#2e75b6"/>')],
  [29, svg(grid + '<path d="M6 2.500h5v4H6zM1.500 6.500H6v4H1.500zM11 6.500h4.500v4H11z" fill="#f0c36d"/>')],
  [29, svg('<path d="M2.500 1.500h12v14h-12zM2.500 5h12M7 1.500v14" fill="#fff"/><path d="M12 6v6H8M10 10l-2 2 2 2" stroke="#2e75b6"/>')],
  [29, svg(rows + '<path d="M6 4l9 10M15 4L6 14" stroke="#d9532c" stroke-width="2.200"/>')],
  [29, svg(rows + '<path d="M6 4l9 10M15 4L6 14" stroke="#d9532c" stroke-width="2.200"/>')],
  [29, svg('<text x="2" y="8" font-size="10" fill="#333" stroke="none">ab</text><text x="2" y="16" font-size="10" fill="#333" stroke="none">c</text><path d="M14 9v4H9M11 11l-2 2 2 2" stroke="#2e75b6"/>')],
  [38, svg('<path d="M15 4V1.500H2L9 8l-7 7.500h13V13" stroke="#444" stroke-width="2"/>') + dd],
  [66, '<i class="cb"></i><span class="lbl">Manual</span>'],
  [29, svg('<path d="M1.500 1.500h13v12h-13zM1.500 5h13M5 1.500v12M9 1.500v12M1.500 9h13" fill="#fff"/><path d="M8.500 7.500h6v9h-6zM10 10h3M10 12h3M10 14h3" fill="#fff" stroke="#444"/>')],
  [82, '<i class="cb">✓</i><span class="lbl">Automatic</span>'],
  [37, svg(grid + '<path d="M4 5h6v6H4z" fill="#2e75b6" stroke="#9cc0e4"/>') + dd],
  [29, svg('<text x="1" y="8" font-size="9" font-weight="700" fill="#2e75b6" stroke="none">A</text><text x="1" y="17" font-size="9" font-weight="700" fill="#8b44ac" stroke="none">Z</text><path d="M12.500 1v13M10 11.500l2.500 3 2.500-3" stroke-width="1.500"/>')],
  [35, svg(grid + '<path d="M16 3l-6 9" stroke="#666" stroke-width="3"/><path d="M5 16c1-4 3-5 6-5-1 3-3 5-6 5z" fill="#2e75b6" stroke="none"/>') + dd],
  [29, circ], [29, circ], [29, circ], [29, circ], [29, circ],
  [29, svg('<path d="M5 1.500h5v3H5M5 13.500h5v3H5M9 7.500h6v3H9zM5 1v15" stroke-dasharray="2 1"/><path d="M7 9H1M3.500 6.500L1 9l2.500 2.500" stroke="#2e75b6" stroke-width="1.500"/>')],
  [29, svg('<path d="M1.500 2v4h3V2M12.500 2v4h3V2" /><path d="M7.500 10.500h2v5h-2z" stroke="#7fa8cf"/><path d="M8.500 9V2M6 4.500L8.500 2 11 4.500" stroke="#2e75b6" stroke-width="1.800"/>')],
  [29, circ], [29, '<span class="pc">%</span>'],
  [29, svg('<path d="M2 1h11L9 6v6l-3-2V6z" fill="#666"/><path d="M8 9l7 7M15 9l-7 7" stroke="#d9532c" stroke-width="1.800"/>')],
  [29, svg('<path d="M4.500 4.500h8v8h-8zM7 4.500v8M10 4.500v8M4.500 7h8M4.500 10h8" fill="#fff"/><path d="M6.500 2l2-2 2 2M6.500 15l2 2 2-2M2 6.500l-2 2 2 2M15 6.500l2 2-2 2" fill="#2e75b6" stroke="#2e75b6"/>')],
  [8, '<svg width="1" height="26" viewBox="0 0 1 26"><path d="M.5 0v26" stroke="#bbb"/></svg>'],
  [29, svg('<path d="M1.500 1.500h6l2 2v8h-8zM7.500 5.500h5l3 3v8h-8zM9 10h5M9 13h5" stroke="#aaa" fill="#eee"/>')],
  [29, svg('<path d="M1.500 10.500h11v5h-11z" fill="#fff" stroke="#444"/><path d="M3 7l8-1M3 4l6-3 5 4v7" stroke="#444"/><path d="M4 9h8"/>')],
  [29, svg('<path d="M1.500 1.500h14v15h-14zM6 4v12M11 4v12M1.500 8h14M1.500 12h14" fill="#fff"/><path d="M1 1h15v3.500H1z" fill="#2e75b6" stroke="none"/>')],
  [28, '<i class="dd"></i>']
];
document.getElementById('qat').innerHTML = items.map(([w, h]) => `<span class="q" style="width:${w}px">${h}</span>`).join('');

// Same pinned apps on both monitors
const apps = document.getElementById('apps');
document.querySelectorAll('.apps').forEach(a => a.append(apps.content.cloneNode(true)));
```
